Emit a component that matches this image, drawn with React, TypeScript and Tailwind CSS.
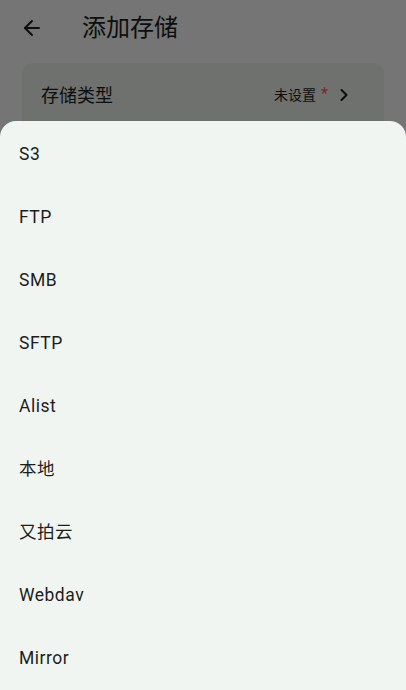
import { ArrowLeft, ChevronRight } from 'lucide-react'

const TYPES = ['S3', 'FTP', 'SMB', 'SFTP', 'Alist', '本地', '又拍云', 'Webdav', 'Mirror']

const FONT = "font-['Roboto','Noto_Sans_CJK_SC',sans-serif]"

export default function App() {
  return (
    <div className={`relative w-[406px] h-[690px] overflow-hidden bg-[#747574] ${FONT}`}>
      <div className="flex h-[55px] items-center pl-[20px]">
        <ArrowLeft size={24} strokeWidth={2} className="text-[#0d0e0d]" />
        <span className="ml-[38px] text-[24px] text-[#0d0e0d]">添加存储</span>
      </div>
      <div className="mx-[22px] mt-[8px] h-[72px] rounded-[12px] bg-[#6f716f] flex items-center justify-between pl-[19px] pr-[30px] pb-[8px]">
        <span className="text-[18px] text-[#0d0e0d]">存储类型</span>
        <div className="flex items-center">
          <span className="text-[14px] text-[#0d0e0d]">未设置</span>
          <span className="ml-[5px] text-[16px] leading-none text-[#7a2a28] -mt-[2px]">*</span>
          <ChevronRight size={20} strokeWidth={2.5} className="ml-[6px] text-[#0d0e0d]" />
        </div>
      </div>
      <div className="absolute left-0 right-0 top-[121px] bottom-0 rounded-t-[16px] bg-[#f1f5f2] pt-[2px]">
        {TYPES.map((t) => (
          <div key={t} className="flex h-[63px] items-center pl-[19px] text-[17.5px] tracking-[0.5px] text-[#1c1e1c]">
            {t}
          </div>
        ))}
      </div>
    </div>
  )
}
